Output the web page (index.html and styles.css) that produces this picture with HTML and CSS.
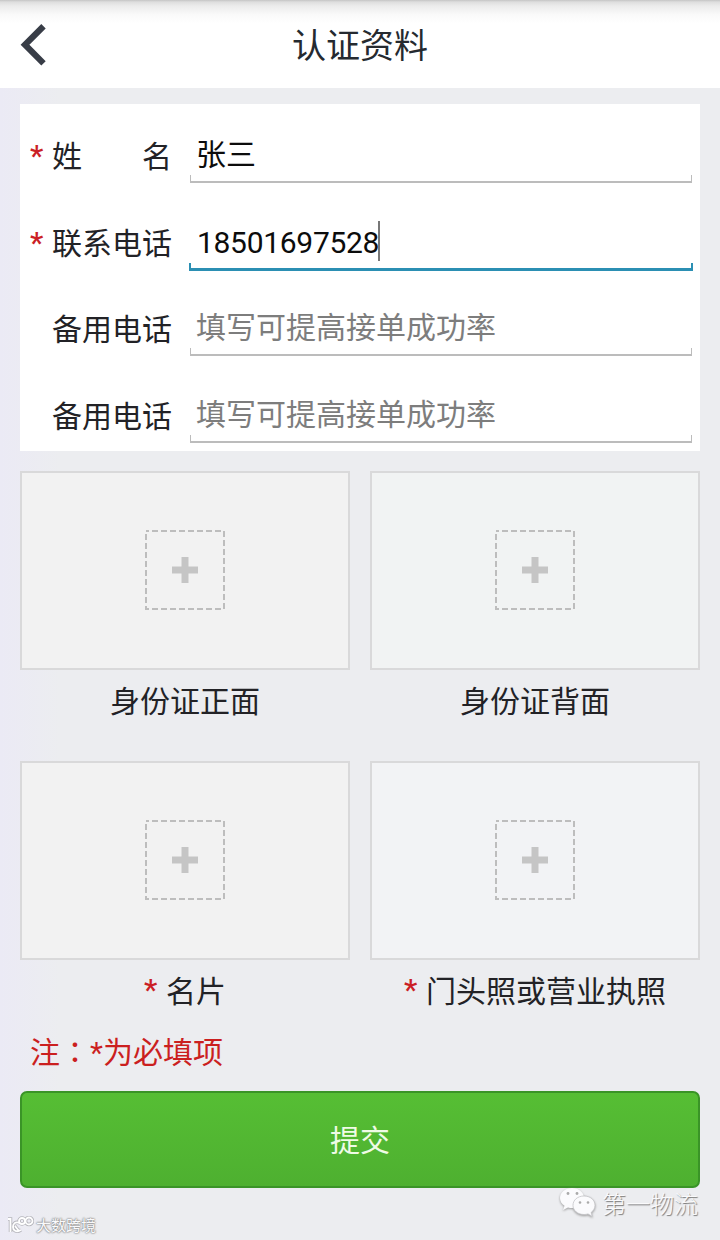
FILE: index.html
```html
<!DOCTYPE html>
<html lang="zh-CN">
<head>
    <meta charset="UTF-8">
    <meta name="viewport" content="width=device-width, initial-scale=1.0">
    <title>认证资料</title>
    <link rel="stylesheet" href="styles.css">
</head>
<body>
    <header class="header">
        <a class="back" href="#" aria-label="返回">
            <svg width="26" height="42" viewBox="0 0 26 42">
                <path d="M23.500 2.200 L5 20.800 L23.500 39.400" fill="none" stroke="#383d47" stroke-width="6.200"/>
            </svg>
        </a>
        <h1>认证资料</h1>
    </header>

    <main>
        <div class="form">
            <div class="row">
                <span class="star">*</span>
                <span class="label"><span>姓</span><span>名</span></span>
                <div class="field">张三</div>
            </div>
            <div class="row">
                <span class="star">*</span>
                <span class="label">联系电话</span>
                <div class="field active"><span class="number">18501697528</span><span class="caret"></span></div>
            </div>
            <div class="row">
                <span class="star"></span>
                <span class="label">备用电话</span>
                <div class="field placeholder">填写可提高接单成功率</div>
            </div>
            <div class="row">
                <span class="star"></span>
                <span class="label">备用电话</span>
                <div class="field placeholder">填写可提高接单成功率</div>
            </div>
        </div>

        <div class="photos">
            <div class="photo">
                <div class="upload">
                    <svg width="80" height="80" viewBox="0 0 80 80">
                        <rect class="dash" x="1" y="1" width="78" height="78"/>
                        <path class="plus" d="M27 40H53M40 27V53"/>
                    </svg>
                </div>
                <div class="caption">身份证正面</div>
            </div>
            <div class="photo">
                <div class="upload cool">
                    <svg width="80" height="80" viewBox="0 0 80 80">
                        <rect class="dash" x="1" y="1" width="78" height="78"/>
                        <path class="plus" d="M27 40H53M40 27V53"/>
                    </svg>
                </div>
                <div class="caption">身份证背面</div>
            </div>
            <div class="photo">
                <div class="upload">
                    <svg width="80" height="80" viewBox="0 0 80 80">
                        <rect class="dash" x="1" y="1" width="78" height="78"/>
                        <path class="plus" d="M27 40H53M40 27V53"/>
                    </svg>
                </div>
                <div class="caption"><span class="star">*</span>名片</div>
            </div>
            <div class="photo">
                <div class="upload blue">
                    <svg width="80" height="80" viewBox="0 0 80 80">
                        <rect class="dash" x="1" y="1" width="78" height="78"/>
                        <path class="plus" d="M27 40H53M40 27V53"/>
                    </svg>
                </div>
                <div class="caption"><span class="star">*</span>门头照或营业执照</div>
            </div>
        </div>

        <p class="note">注<span class="colon" lang="zh-TW">：</span><span class="note-star">*</span>为必填项</p>
        <button class="submit" type="button">提交</button>
    </main>

    <!-- watermarks -->
    <div class="mark mark-right">
        <svg width="38" height="32" viewBox="0 0 38 32">
            <path d="M13 1C6 1 1 5.500 1 11c0 3.200 1.700 6 4.500 7.800L4 23l5-2.600c1.300.4 2.700.6 4 .6 7 0 12-4.500 12-10S20 1 13 1z"/>
            <path class="front" d="M25 9c-6.400 0-11 4.100-11 9.300S18.600 27.500 25 27.500c1.400 0 2.700-.2 4-.6l4.300 2.500-1.200-3.900c2.400-1.700 3.900-4.300 3.900-7.200C36 13.100 31.400 9 25 9z"/>
            <g class="eyes">
                <circle cx="9" cy="6.500" r="1.400"/>
                <circle cx="18" cy="6.500" r="1.400"/>
                <circle cx="21" cy="15.500" r="1.300"/>
                <circle cx="29" cy="15.500" r="1.300"/>
            </g>
        </svg>
        <span>第一物流</span>
    </div>
    <div class="mark mark-left">
        <svg width="27" height="18" viewBox="0 0 27 18">
            <g class="outline">
                <path d="M1 3H3.500V16M13 7C8 5 6 8 6 11s3 6 8 3M8 10l4 5"/>
                <circle cx="15" cy="5" r="3"/>
                <circle cx="22" cy="5" r="3.500"/>
            </g>
            <g class="lines">
                <path d="M1 3H3.500V16M13 7C8 5 6 8 6 11s3 6 8 3M8 10l4 5"/>
                <circle cx="15" cy="5" r="3"/>
                <circle cx="22" cy="5" r="3.500"/>
            </g>
        </svg>
        <span>大数跨境</span>
    </div>
</body>
</html>
```

FILE: styles.css
```css
* {
    box-sizing: border-box;
}
body {
    position: relative;
    margin: 0;
    height: 1240px;
    overflow: hidden;
    background: linear-gradient(to right, #ebeaf5, #ecedf0 60px, #ecedf0);
    font-family: "Noto Sans CJK SC", sans-serif;
    font-size: 30px;
    color: #222226;
}
.header {
    display: grid;
    grid-template-columns: 60px 1fr 60px;
    align-items: center;
    height: 88px;
    background: linear-gradient(#c4c4c4, #dedede 2px, #ececec 6px, #fafafa 15px, #fff 24px);
}
.back {
    display: flex;
    padding: 2px 0 0 20px;
}
h1 {
    margin: 0;
    font-size: 34px;
    line-height: 50px;
    font-weight: 400;
    text-align: center;
    color: #252a30;
}
main {
    padding: 16px 20px 0;
}
.form {
    height: 347px;
    background-color: #fff;
}
.row {
    display: flex;
    height: 86.5px;
    padding: 8px 7px 0 10px;
    line-height: 84px;
}
.star {
    flex: none;
    width: 22px;
    font-family: Roboto, sans-serif;
    font-weight: 500;
    color: #cb1f26;
}
.row .star {
    line-height: 87px;
}
.label {
    display: flex;
    justify-content: space-between;
    width: 120px;
    margin-right: 17px;
}
/* underline with a short tick at both ends */
.field {
    --line: #bcbcbc;
    --thick: 2px;
    --side: 1px;
    flex: 1;
    height: 71px;
    margin: 0 1px;
    padding-left: 6px;
    line-height: 81px;
    color: #0c0c0c;
    background:
        linear-gradient(var(--line), var(--line)) bottom / 100% var(--thick) no-repeat,
        linear-gradient(var(--line), var(--line)) left bottom / var(--side) 8px no-repeat,
        linear-gradient(var(--line), var(--line)) right bottom / var(--side) 8px no-repeat;
}
.field.active {
    --line: #2b8fb3;
    --thick: 3px;
    --side: 2px;
    display: flex;
    height: 72px;
    margin: 0;
    padding-left: 8px;
    line-height: 87px;
}
.number {
    font-family: Roboto, sans-serif;
    letter-spacing: -0.3px;
}
.caret {
    width: 2px;
    height: 40px;
    margin: 22px 0 0 -1px;
    background-color: #777;
}
.field.placeholder {
    color: #7d7d7d;
}
.photos {
    display: grid;
    grid-template-columns: 1fr 1fr;
    column-gap: 20px;
    margin-top: 20px;
}
.photo {
    height: 290px;
}
.upload {
    display: flex;
    align-items: center;
    justify-content: center;
    height: 199px;
    padding-bottom: 1px;
    border: 2px solid #d9d9da;
    background-color: #f2f2f2;
}
.upload.cool {
    background-color: #f1f3f3;
}
.upload.blue {
    background-color: #f2f3f5;
}
.dash {
    fill: none;
    stroke: #bdbdbd;
    stroke-width: 2;
    stroke-dasharray: 6 3;
    stroke-dashoffset: 3;
}
.plus {
    fill: none;
    stroke: #c5c5c5;
    stroke-width: 7;
}
.caption {
    display: flex;
    justify-content: center;
    line-height: 59px;
}
.note {
    margin: -20px 0 0;
    padding-left: 10px;
    line-height: 38px;
    height: 60px;
    color: #cb1f1f;
}
.note-star {
    font-family: Roboto, sans-serif;
}
.colon {
    font-family: "Noto Sans CJK TC", sans-serif;
}
.submit {
    display: block;
    width: 100%;
    height: 97px;
    padding: 0 0 4px;
    border: 2px solid #3a9427;
    border-radius: 7px;
    background: linear-gradient(#56be34, #4eb030);
    font: inherit;
    color: #effbe6;
}
.mark {
    position: absolute;
    display: flex;
    align-items: center;
    color: #fafafc;
    white-space: nowrap;
}
.mark-right {
    left: 559px;
    top: 1187px;
    gap: 5px;
    font-size: 24px;
    line-height: 32px;
    font-weight: 300;
    text-shadow: 1px 1px 1px #777;
}
.mark-right svg {
    fill: #fbfbfd;
    filter: drop-shadow(0 1px 1px #999);
}
.mark-right .front {
    stroke: #c4c4c8;
    stroke-width: 0.8;
}
.mark-right .eyes {
    fill: #aaa;
}
.mark-left {
    left: 7px;
    top: 1215px;
    gap: 2px;
    font-size: 15px;
    line-height: 20px;
    text-shadow: 0 0 1px #888, 0 0 2px #888, 0 0 2px #999;
}
.mark-left svg {
    fill: none;
}
.outline {
    stroke: #b5b5bb;
    stroke-width: 3.5;
}
.lines {
    stroke: #fff;
    stroke-width: 1.8;
}
```
